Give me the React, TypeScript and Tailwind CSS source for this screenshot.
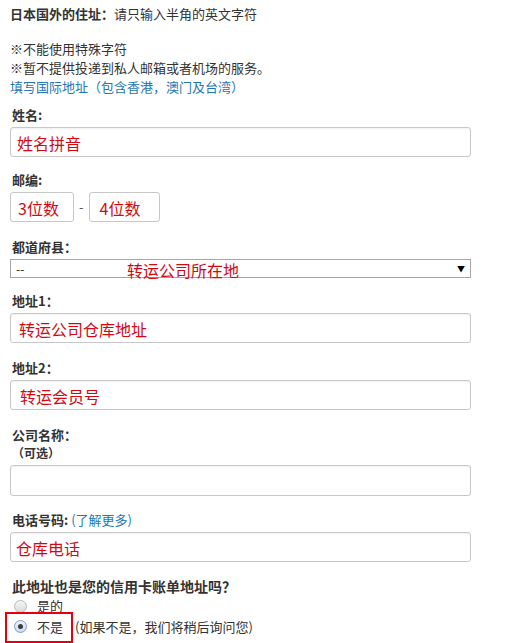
import React from "react";

const FONT = "font-['Noto_Sans_CJK_SC','Noto_Sans',sans-serif]";

function Label({ children, className = "" }: { children: React.ReactNode; className?: string }) {
  return (
    <div className={`h-[19px] pl-[2px] font-bold leading-[19px] text-[#333] ${className || "text-[13px]"}`}>
      {children}
    </div>
  );
}

function Field({
  value,
  pad,
  className = "",
}: {
  value?: string;
  pad: string;
  className?: string;
}) {
  return (
    <div
      className={`flex h-[30px] w-[461px] items-center rounded-[3px] border border-[#c8c8c8] bg-white shadow-[inset_0_1px_2px_rgba(0,0,0,0.06)] ${pad} ${className}`}
    >
      <span className="pt-[1px] text-[16px] leading-none text-[#d10a12]">
        {value}
      </span>
    </div>
  );
}

function Radio({ checked }: { checked?: boolean }) {
  if (checked) {
    return (
      <span className="flex h-[13px] w-[13px] items-center justify-center rounded-full border border-[#7f9dd0] bg-gradient-to-b from-[#eef3fb] to-[#cfdbef]">
        <span className="h-[5px] w-[5px] rounded-full bg-[#3c3c3c]" />
      </span>
    );
  }
  return (
    <span className="h-[13px] w-[13px] rounded-full border border-[#b8b8b8] bg-gradient-to-b from-[#f6f6f6] to-[#d9d9d9]" />
  );
}

export default function App() {
  return (
    <div className={`h-[643px] w-[511px] overflow-hidden bg-white pl-[10px] pt-[4px] text-[#333] ${FONT}`}>
      <div className="h-[19px] text-[13px] leading-[19px]">
        <span className="font-bold">日本国外的住址：</span>
        请只输入半角的英文字符
      </div>

      <div className="mt-[16px] text-[13px] leading-[19px]">
        <div>※不能使用特殊字符</div>
        <div>※暂不提供投递到私人邮箱或者机场的服务。</div>
        <div className="text-[#2577b1]">填写国际地址（包含香港，澳门及台湾）</div>
      </div>

      <div className="mt-[9px]">
        <Label>姓名:</Label>
        <Field className="mt-[3px]" pad="pl-[6px]" value="姓名拼音" />
      </div>

      <div className="mt-[13px]">
        <Label>邮编:</Label>
        <div className="mt-[3px] flex h-[30px] items-center">
          <div className="flex h-[30px] w-[64px] items-center rounded-[3px] border border-[#c8c8c8] pl-[7px]">
            <span className="pt-[1px] text-[16px] leading-none text-[#d10a12]">3位数</span>
          </div>
          <span className="mx-[5px] text-[13px] text-[#555]">-</span>
          <div className="flex h-[30px] w-[71px] items-center rounded-[3px] border border-[#c8c8c8] pl-[10px]">
            <span className="pt-[1px] text-[16px] leading-none text-[#d10a12]">4位数</span>
          </div>
        </div>
      </div>

      <div className="mt-[15px]">
        <Label>都道府县：</Label>
        <div className="mt-[3px] flex h-[19px] w-[461px] items-center border border-[#a6a6a6] bg-white pl-[5px] pr-[5px]">
          <span className="w-[111px] text-[12px] leading-none text-[#222]">--</span>
          <span className="pt-[2px] text-[16px] leading-none text-[#d10a12]">转运公司所在地</span>
          <span className="ml-auto text-[8px] leading-none text-black">▼</span>
        </div>
      </div>

      <div className="mt-[13px]">
        <Label>地址1：</Label>
        <Field className="mt-[3px]" pad="pl-[8px]" value="转运公司仓库地址" />
      </div>

      <div className="mt-[15px]">
        <Label>地址2：</Label>
        <Field className="mt-[3px]" pad="pl-[9px]" value="转运会员号" />
      </div>

      <div className="mt-[15px]">
        <Label>公司名称：</Label>
        <div className="h-[17px] pl-[2px] text-[12px] font-bold leading-[17px] text-[#333]">（可选）</div>
        <Field className="mt-[4px] h-[31px]" pad="pl-[6px]" />
      </div>

      <div className="mt-[14px]">
        <div className="h-[19px] pl-[2px] text-[13px] leading-[19px]">
          <span className="font-bold">电话号码:</span>
          <span className="text-[#2577b1]"> (了解更多)</span>
        </div>
        <Field className="mt-[3px]" pad="pl-[5px]" value="仓库电话" />
      </div>

      <div className="mt-[15px]">
        <Label className="text-[14px]">此地址也是您的信用卡账单地址吗？</Label>
        <div className="flex h-[20px] items-center pl-[4px] text-[13px]">
          <Radio />
          <span className="ml-[10px]">是的</span>
        </div>
        <div className="-mt-[4px] ml-[-5px] flex items-center text-[13px]">
          <div className="flex h-[31px] items-center border-2 border-[#e3000f] pb-[2px] pl-[7px] pr-[8px]">
            <Radio checked />
            <span className="ml-[10px]">不是</span>
          </div>
          <span className="ml-[2px] pb-[2px]">(如果不是，我们将稍后询问您)</span>
        </div>
      </div>
    </div>
  );
}
